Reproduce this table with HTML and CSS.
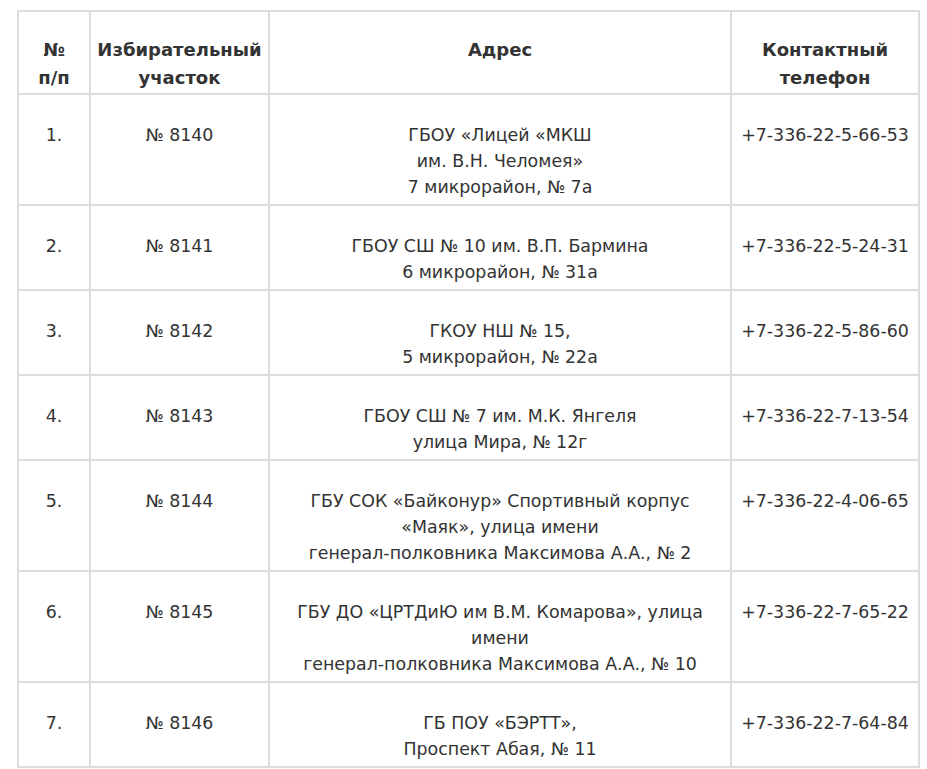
FILE: index.html
```html
<!DOCTYPE html>
<html lang="ru">
<head>
<meta charset="utf-8">
<link rel="stylesheet" href="styles.css">
</head>
<body>
<table class="tbl">
  <colgroup>
    <col class="c1"><col class="c2"><col class="c3"><col class="c4">
  </colgroup>
  <thead>
    <tr>
      <th>№<br>п/п</th>
      <th>Избирательный участок</th>
      <th>Адрес</th>
      <th>Контактный телефон</th>
    </tr>
  </thead>
  <tbody>
    <tr>
      <td>1.</td>
      <td>№ 8140</td>
      <td>ГБОУ «Лицей «МКШ<br>им. В.Н. Челомея»<br>7 микрорайон, № 7а</td>
      <td>+7-336-22-5-66-53</td>
    </tr>
    <tr>
      <td>2.</td>
      <td>№ 8141</td>
      <td>ГБОУ СШ № 10 им. В.П. Бармина<br>6 микрорайон, № 31а</td>
      <td>+7-336-22-5-24-31</td>
    </tr>
    <tr>
      <td>3.</td>
      <td>№ 8142</td>
      <td>ГКОУ НШ № 15,<br>5 микрорайон, № 22а</td>
      <td>+7-336-22-5-86-60</td>
    </tr>
    <tr>
      <td>4.</td>
      <td>№ 8143</td>
      <td>ГБОУ СШ № 7 им. М.К. Янгеля<br>улица Мира, № 12г</td>
      <td>+7-336-22-7-13-54</td>
    </tr>
    <tr>
      <td>5.</td>
      <td>№ 8144</td>
      <td>ГБУ СОК «Байконур» Спортивный корпус<br>«Маяк», улица имени<br>генерал-полковника Максимова А.А., № 2</td>
      <td>+7-336-22-4-06-65</td>
    </tr>
    <tr>
      <td>6.</td>
      <td>№ 8145</td>
      <td>ГБУ ДО «ЦРТДиЮ им В.М. Комарова», улица<br>имени<br>генерал-полковника Максимова А.А., № 10</td>
      <td>+7-336-22-7-65-22</td>
    </tr>
    <tr>
      <td>7.</td>
      <td>№ 8146</td>
      <td>ГБ ПОУ «БЭРТТ»,<br>Проспект Абая, № 11</td>
      <td>+7-336-22-7-64-84</td>
    </tr>
  </tbody>
</table>
</body>
</html>
```

FILE: styles.css
```css
html, body {
  margin: 0;
  padding: 0;
  background: #fff;
}

body {
  font-family: "DejaVu Sans", Verdana, sans-serif;
  font-size: 17.4px;
  color: #333;
}

.tbl {
  margin: 10px 0 0 17px;
  width: 901px;
  border-collapse: collapse;
  table-layout: fixed;
}

.c1 { width: 72px; }
.c2 { width: 179px; }
.c3 { width: 462px; }
.c4 { width: 188px; }

.tbl th,
.tbl td {
  border: 2px solid #dddddd;
  text-align: center;
  vertical-align: top;
  padding-left: 2px;
  padding-right: 2px;
}

.tbl th {
  font-size: 18px;
  font-weight: bold;
  line-height: 28px;
  padding-top: 24px;
  padding-bottom: 1px;
}

.tbl td {
  line-height: 26px;
  padding-top: 27px;
  padding-bottom: 4px;
}
```
